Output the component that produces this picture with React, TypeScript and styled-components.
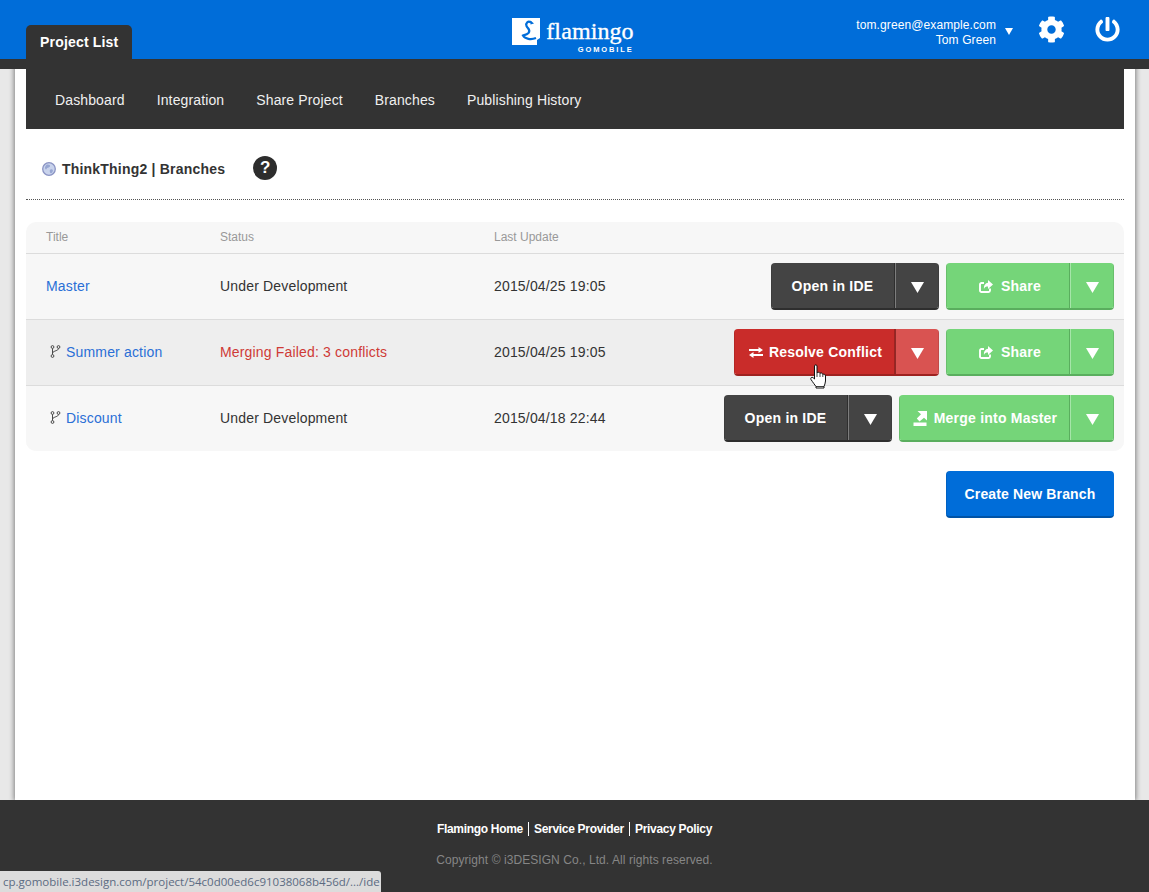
import React from "react";
import styled, { createGlobalStyle } from "styled-components";
import { FaCog, FaPowerOff } from "react-icons/fa";

const Global = createGlobalStyle`
  html, body { margin: 0; padding: 0; }
  body { font-family: "Liberation Sans", Arial, sans-serif; font-size: 14px; color: #333; background: #e8e8e8; }
  #root { min-height: 892px; }
`;

const Page = styled.div`
  position: relative;
  display: flex;
  flex-direction: column;
  height: 892px;
  overflow: hidden;
`;

const TopBar = styled.header`
  position: relative;
  z-index: 2;
  display: grid;
  grid-template-columns: 1fr auto 1fr;
  height: 59px;
  padding: 0 29px 0 26px;
  background: #006dd9;
  color: #fff;
`;

const Tab = styled.a`
  align-self: end;
  justify-self: start;
  height: 34px;
  line-height: 34px;
  padding: 0 14px;
  background: #333;
  border-radius: 5px 5px 0 0;
  font-weight: 700;
  font-size: 14px;
  letter-spacing: 0.18px;
  color: #fff;
`;

const Logo = styled.div`
  display: flex;
  gap: 6px;
  align-items: flex-start;
  padding-top: 18px;
`;

const LogoWords = styled.div`
  display: flex;
  flex-direction: column;
  align-items: flex-end;
`;

const LogoName = styled.span`
  font-family: "Liberation Serif", serif;
  font-size: 24px;
  line-height: 26px;
  -webkit-text-stroke: 0.35px #fff;
  letter-spacing: 0.1px;
  color: #fff;
`;

const LogoSub = styled.span`
  font-size: 7.5px;
  line-height: 8px;
  font-weight: 700;
  letter-spacing: 1.9px;
  margin-top: 2px;
  color: #fff;
`;

const UserArea = styled.div`
  display: flex;
  justify-content: flex-end;
  align-items: center;
  height: 59px;
`;

const UserText = styled.div`
  text-align: right;
  font-size: 12px;
  line-height: 15px;
  letter-spacing: 0.1px;
  color: #fff;
  margin-top: 7px;
`;

const UserCaret = styled.span`
  width: 0;
  height: 0;
  margin: 4px 0 0 9px;
  border-left: 4px solid transparent;
  border-right: 4px solid transparent;
  border-top: 7px solid #fff;
`;

const IconSlot = styled.span<{ $gap: number; $size: number }>`
  display: flex;
  margin-left: ${(p) => p.$gap}px;
  font-size: ${(p) => p.$size}px;
  color: #fff;
`;

const Band = styled.div`
  position: relative;
  z-index: 2;
  height: 10px;
  background: #333;
`;

const Sheet = styled.main`
  flex: 1;
  width: 1120px;
  box-sizing: border-box;
  margin-left: 15px;
  margin-top: -10px;
  padding: 10px 11px 0;
  background: #fff;
  box-shadow: 0 0 5px 1px rgba(0, 0, 0, 0.45);
`;

const Nav = styled.nav`
  display: flex;
  gap: 32px;
  align-items: center;
  height: 60px;
  padding: 2px 0 0 29px;
  box-sizing: border-box;
  background: #333;
`;

const NavLink = styled.a`
  font-size: 14px;
  color: #f0f0f0;
  letter-spacing: 0.13px;
`;

const TitleRow = styled.div`
  display: flex;
  align-items: center;
  height: 71px;
  padding: 10px 0 0 16px;
  box-sizing: border-box;
  border-bottom: 1px dotted #555;
`;

const Heading = styled.h1`
  margin: 0 0 0 6px;
  font-size: 14px;
  font-weight: 700;
  letter-spacing: 0.2px;
  color: #333;
`;

const Help = styled.span`
  width: 24px;
  height: 24px;
  margin-left: 28px;
  margin-bottom: 2px;
  border-radius: 50%;
  background: #2d2d2d;
  color: #fff;
  font-size: 17px;
  font-weight: 700;
  line-height: 24px;
  text-align: center;
`;

const Table = styled.section`
  margin-top: 22px;
  background: #f7f7f7;
  border-radius: 10px;
  overflow: hidden;
`;

const columns = "174px 274px 1fr";

const HeadRow = styled.div`
  display: grid;
  grid-template-columns: ${columns};
  align-items: center;
  height: 31px;
  box-sizing: border-box;
  padding: 0 0 2px 20px;
  font-size: 12px;
  color: #999;
`;

const Row = styled.div<{ $active?: boolean }>`
  display: grid;
  grid-template-columns: ${columns};
  align-items: center;
  height: 66px;
  box-sizing: border-box;
  padding: 0 10px 2px 20px;
  border-top: 1px solid #dcdcdc;
  background: ${(p) => (p.$active ? "#eeeeee" : "#f7f7f7")};
  color: #333;
  letter-spacing: 0.17px;
`;

const TitleCell = styled.div<{ $branch?: boolean }>`
  display: flex;
  align-items: center;
  gap: 5px;
  padding-left: ${(p) => (p.$branch ? "4px" : "0")};
`;

const BranchLink = styled.a`
  font-size: 14px;
  color: #2a6fd6;
`;

const Status = styled.div<{ $error?: boolean }>`
  color: ${(p) => (p.$error ? "#cf3a36" : "#333")};
`;

const Updated = styled.div`
  display: flex;
  align-items: center;
  justify-content: space-between;
`;

const Actions = styled.div`
  position: relative;
  display: flex;
  gap: 7px;
  margin-top: 2px;
`;

const tones = {
  dark: { main: "#444444", caret: "#444444", edge: "#2e2e2e", line: "#7d7d7d" },
  green: { main: "#75d579", caret: "#75d579", edge: "#5aae5e", line: "#a6e5a9" },
  red: { main: "#c92c2a", caret: "#d95351", edge: "#9e2220", line: "#8f2a28" },
  blue: { main: "#006dd9", caret: "#006dd9", edge: "#0053a6", line: "#006dd9" },
};
type Tone = keyof typeof tones;

const Split = styled.div<{ $tone: Tone }>`
  display: flex;
  height: 47px;
  box-sizing: border-box;
  border-radius: 4px;
  overflow: hidden;
  border-bottom: 2px solid ${(p) => tones[p.$tone].edge};
  color: #fff;
`;

const MainButton = styled.button<{ $tone: Tone; $width: number }>`
  display: flex;
  align-items: center;
  justify-content: center;
  gap: 6px;
  width: ${(p) => p.$width}px;
  height: 100%;
  padding: 1px 0 0;
  border: 0;
  border-right: 1px solid ${(p) => tones[p.$tone].edge};
  box-shadow: inset 1px 0 0 rgba(0, 0, 0, 0.1);
  background: ${(p) => tones[p.$tone].main};
  color: #fff;
  font-family: "Liberation Sans", Arial, sans-serif;
  font-size: 14px;
  font-weight: 700;
  letter-spacing: 0.22px;
`;

const CaretButton = styled.button<{ $tone: Tone }>`
  display: flex;
  align-items: center;
  justify-content: center;
  width: 44px;
  height: 100%;
  padding: 3px 0 0;
  border: 0;
  border-left: 1px solid ${(p) => tones[p.$tone].line};
  box-shadow: inset -1px 0 0 rgba(0, 0, 0, 0.1);
  background: ${(p) => tones[p.$tone].caret};
`;

const Triangle = styled.svg`
  width: 13px;
  height: 11px;
  fill: #fff;
`;

const ShareGlyph = styled.svg`
  width: 14px;
  height: 13px;
  margin: 0 2px 0 5px;
`;

const ExchangeGlyph = styled.svg`
  width: 14px;
  height: 11px;
  margin-left: 3px;
  fill: #fff;
`;

const MergeGlyph = styled.svg`
  width: 14px;
  height: 15px;
  margin: 0 1px 0 2px;
  fill: #fff;
`;

const BottomBar = styled.div`
  display: flex;
  justify-content: flex-end;
  padding: 20px 10px 0 0;
`;

const CreateButton = styled(MainButton)`
  border-right: 0;
  border-bottom: 2px solid ${tones.blue.edge};
  border-radius: 4px;
  height: 47px;
  letter-spacing: 0.15px;
`;

const Footer = styled.footer`
  position: relative;
  z-index: 2;
  height: 92px;
  box-sizing: border-box;
  padding-top: 22px;
  background: #333;
  text-align: center;
`;

const FooterLinks = styled.div`
  display: flex;
  justify-content: center;
  line-height: 14px;
  font-size: 12px;
  font-weight: 700;
  color: #fff;
`;

const FooterLink = styled.a<{ $divided?: boolean }>`
  color: #fff;
  letter-spacing: -0.3px;
  ${(p) => p.$divided && "border-left: 1px solid #fff; margin-left: 5px; padding-left: 5px;"}
`;

const Copyright = styled.div`
  margin-top: 17px;
  font-size: 12px;
  line-height: 14px;
  letter-spacing: 0.07px;
  color: #868686;
`;

const StatusBubble = styled.div`
  position: absolute;
  z-index: 3;
  left: 0;
  bottom: 0;
  width: 381px;
  height: 21px;
  box-sizing: border-box;
  padding-left: 3px;
  background: #dcdcdc;
  border-radius: 0 3px 0 0;
  font-family: "Open Sans", sans-serif;
  font-size: 11.5px;
  line-height: 22px;
  white-space: nowrap;
  color: #5b6b82;
`;

const Pointer = styled.svg`
  position: absolute;
  left: 76px;
  top: 35px;
  width: 17px;
  height: 25px;
  z-index: 2;
`;

const Caret = () => (
  <Triangle viewBox="0 0 13 11">
    <path d="M0 0H13L6.5 11Z" />
  </Triangle>
);

const Globe = () => (
  <svg width="14" height="14" viewBox="0 0 14 14">
    <circle cx="7" cy="7" r="6.3" fill="#c9d3ec" stroke="#8a93c3" strokeWidth="1.3" />
    <path d="M5 2.500C7 2.200 8.500 3 8 4.500 7 6 5 5.200 4.500 7 4 8 3 7 3 5.500 3.400 4 4 3 5 2.500ZM8.500 7.500C10.500 7 11.500 8 10.500 10 9.500 11.500 8.500 11.500 8 10.500 7.700 9 7.500 8 8.500 7.500Z" fill="#97a6d2" />
  </svg>
);

const SwanMark = () => (
  <svg width="28" height="27" viewBox="0 0 28 27">
    <path d="M0 0H28V20L25 22V27H0Z" fill="#fff" />
    <path d="M19 4.500C16 2.500 13.500 5 14.500 8 16 11 19 12 16.500 15 14.500 17 12 17 11 17.500 13 21 19 22 24 20" fill="none" stroke="#006dd9" strokeWidth="2.2" />
    <path d="M18.500 2.500L22 5.500 18.500 6.500Z" fill="#006dd9" />
  </svg>
);

const ShareIcon = () => (
  <ShareGlyph viewBox="0 0 14 13">
    <path d="M11 8.500V10.500A1.500 1.500 0 0 1 9.500 12H2.500A1.500 1.500 0 0 1 1 10.500V4.500A1.500 1.500 0 0 1 2.500 3H5" fill="none" stroke="#fff" strokeWidth="1.9" />
    <path d="M9 0L14 4.500 9 9V6.500C7 6.500 5.500 7 5 9 4.500 5.500 6.500 2.900 9 2.700Z" fill="#fff" />
  </ShareGlyph>
);

const ExchangeIcon = () => (
  <ExchangeGlyph viewBox="0 0 14 11">
    <path d="M0 2H9.500V0L14 3 9.500 6V4H0Z" />
    <path d="M14 7H4.500V5L0 8 4.500 11V9H14Z" />
  </ExchangeGlyph>
);

const MergeIcon = () => (
  <MergeGlyph viewBox="0 0 14 15">
    <path d="M0.500 11.500H13.500V15H0.500Z" />
    <path d="M4.500 0H14V9.500L11 6.800 6.500 10.500 3.800 7.500 8 3.300Z" />
  </MergeGlyph>
);

const ForkIcon = () => (
  <svg width="11" height="13" viewBox="0 0 11 13" fill="none" stroke="#4a4a4a" strokeWidth="1">
    <circle cx="2.500" cy="2" r="1.400" />
    <circle cx="8.500" cy="2" r="1.400" />
    <circle cx="2.500" cy="11" r="1.400" />
    <path d="M2.500 3.400V9.600M8.500 3.400C8.500 6 3.500 5.500 2.500 8" />
  </svg>
);

const Hand = () => (
  <Pointer viewBox="0 0 17 25">
    <path
      d="M4.500 2C4.500 0.500 7 0.500 7 2V9C7.500 8 9.500 8 10 9.500 10.500 8.500 12.500 8.800 12.800 10.500 13.500 9.800 15.500 10.300 15.500 12V17C15.500 19 14.500 21 14 22.500V24H6V22.500C4.500 20.500 3 18.500 1 15.500 0.200 14 1.800 12.500 3.200 13.800L4.500 15Z"
      fill="#fff"
      stroke="#111"
      strokeWidth="1"
      strokeLinejoin="round"
    />
    <path d="M7 9V13M10 9.500V13M12.800 10.500V13M6 22.500H14" stroke="#111" strokeWidth="0.8" fill="none" />
  </Pointer>
);

type SplitProps = { tone: Tone; width: number; children: React.ReactNode };
const SplitButton = ({ tone, width, children }: SplitProps) => (
  <Split $tone={tone}>
    <MainButton $tone={tone} $width={width}>{children}</MainButton>
    <CaretButton $tone={tone}><Caret /></CaretButton>
  </Split>
);

export default function App() {
  return (
    <Page>
      <Global />
      <TopBar>
        <Tab>Project List</Tab>
        <Logo>
          <SwanMark />
          <LogoWords>
            <LogoName>flamingo</LogoName>
            <LogoSub>GOMOBILE</LogoSub>
          </LogoWords>
        </Logo>
        <UserArea>
          <UserText>
            tom.green@example.com
            <br />
            Tom Green
          </UserText>
          <UserCaret />
          <IconSlot $gap={25} $size={27}><FaCog /></IconSlot>
          <IconSlot $gap={30} $size={25}><FaPowerOff /></IconSlot>
        </UserArea>
      </TopBar>
      <Band />
      <Sheet>
        <Nav>
          <NavLink>Dashboard</NavLink>
          <NavLink>Integration</NavLink>
          <NavLink>Share Project</NavLink>
          <NavLink>Branches</NavLink>
          <NavLink>Publishing History</NavLink>
        </Nav>
        <TitleRow>
          <Globe />
          <Heading>ThinkThing2 | Branches</Heading>
          <Help>?</Help>
        </TitleRow>
        <Table>
          <HeadRow>
            <span>Title</span>
            <span>Status</span>
            <span>Last Update</span>
          </HeadRow>
          <Row>
            <TitleCell><BranchLink>Master</BranchLink></TitleCell>
            <Status>Under Development</Status>
            <Updated>
              2015/04/25 19:05
              <Actions>
                <SplitButton tone="dark" width={124}>Open in IDE</SplitButton>
                <SplitButton tone="green" width={124}><ShareIcon />Share</SplitButton>
              </Actions>
            </Updated>
          </Row>
          <Row $active>
            <TitleCell $branch><ForkIcon /><BranchLink>Summer action</BranchLink></TitleCell>
            <Status $error>Merging Failed: 3 conflicts</Status>
            <Updated>
              2015/04/25 19:05
              <Actions>
                <SplitButton tone="red" width={161}><ExchangeIcon />Resolve Conflict</SplitButton>
                <SplitButton tone="green" width={124}><ShareIcon />Share</SplitButton>
                <Hand />
              </Actions>
            </Updated>
          </Row>
          <Row>
            <TitleCell $branch><ForkIcon /><BranchLink>Discount</BranchLink></TitleCell>
            <Status>Under Development</Status>
            <Updated>
              2015/04/18 22:44
              <Actions>
                <SplitButton tone="dark" width={124}>Open in IDE</SplitButton>
                <SplitButton tone="green" width={171}><MergeIcon />Merge into Master</SplitButton>
              </Actions>
            </Updated>
          </Row>
        </Table>
        <BottomBar>
          <CreateButton $tone="blue" $width={168}>Create New Branch</CreateButton>
        </BottomBar>
      </Sheet>
      <Footer>
        <FooterLinks>
          <FooterLink>Flamingo Home</FooterLink>
          <FooterLink $divided>Service Provider</FooterLink>
          <FooterLink $divided>Privacy Policy</FooterLink>
        </FooterLinks>
        <Copyright>Copyright © i3DESIGN Co., Ltd. All rights reserved.</Copyright>
      </Footer>
      <StatusBubble>cp.gomobile.i3design.com/project/54c0d00ed6c91038068b456d/.../ide</StatusBubble>
    </Page>
  );
}
